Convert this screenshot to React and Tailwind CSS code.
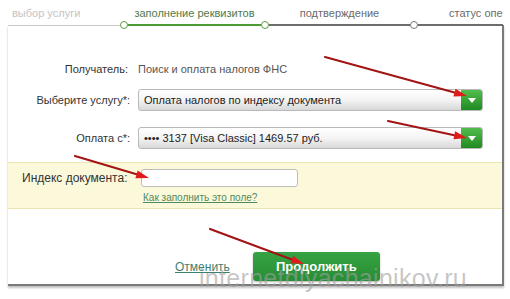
import { useState } from 'react';

// ─── Red arrow overlay (annotation drawn on top of the screenshot) ──────────
function Arrow({ x1, y1, x2, y2 }) {
  const a = Math.atan2(y2 - y1, x2 - x1);
  const len = 13;
  const w = 4;
  const bx = x2 - Math.cos(a) * len;
  const by = y2 - Math.sin(a) * len;
  const px = -Math.sin(a) * w;
  const py = Math.cos(a) * w;
  return (
    <g>
      <line x1={x1} y1={y1} x2={bx} y2={by} stroke="#a31515" strokeWidth="2.2" strokeLinecap="round" />
      <polygon points={`${x2},${y2} ${bx + px},${by + py} ${bx - px},${by - py}`} fill="#e01b1b" />
    </g>
  );
}

function SelectBox({ text }) {
  return (
    <div className="w-[345px] h-[22px] flex items-stretch rounded-[3px] border border-[#b9b9b9] bg-gradient-to-b from-white via-[#f4f4f4] to-[#d8d8d8] overflow-hidden">
      <div className="flex-1 flex items-center pl-[5px] text-[11px] text-[#222]">{text}</div>
      <div className="w-[21px] flex items-center justify-center bg-gradient-to-b from-[#52bd4c] to-[#1e8a22]">
        <svg width="8" height="5" viewBox="0 0 8 5">
          <path d="M0 0 L8 0 L4 5 Z" fill="#ffffff" />
        </svg>
      </div>
    </div>
  );
}

function Circle({ color }) {
  return <div className={`w-[8px] h-[8px] rounded-full bg-white border-[1.5px] ${color}`} />;
}

export default function App() {
  const [index, setIndex] = useState('');

  return (
    <div className="w-[510px] h-[299px] bg-white relative overflow-hidden" style={{ fontFamily: '"Liberation Sans", Arial, sans-serif' }}>
      {/* Steps */}
      <div className="flex h-[21px] items-end text-[11px] leading-none pb-[2px]">
        <div className="w-[124px] pl-[12px] text-[#c4c4c4]">выбор услуги</div>
        <div className="w-[141px] text-center text-[#4d7a4d]">заполнение реквизитов</div>
        <div className="w-[149px] text-center text-[#6a6a6a]">подтверждение</div>
        <div className="w-[92px] pl-[35px] text-[#6a6a6a] whitespace-nowrap">статус опе</div>
      </div>
      <div className="flex items-center h-[8px] pl-[8px]">
        <div className="w-[112px] h-px bg-[#c8c8c8]" />
        <Circle color="border-[#5c9a45]" />
        <div className="w-[133px] h-[2px] bg-[#4b9a33]" />
        <Circle color="border-[#5c9a45]" />
        <div className="w-[141px] h-[2px] bg-[#6d6d6d]" />
        <Circle color="border-[#777]" />
        <div className="w-[85px] h-[2px] bg-[#6d6d6d]" />
      </div>

      {/* Form card */}
      <div className="ml-[8px] w-[496px] h-[261px] -mt-[4px] border-r-2 border-b-2 border-[#7a7a7a] shadow-[0_2px_2px_rgba(0,0,0,0.25)] flex flex-col">
        <div className="flex items-center h-[16px] mt-[36px] text-[11px]">
          <div className="w-[120px] text-right text-[#333]">Получатель:</div>
          <div className="ml-[10px] text-[#555]">Поиск и оплата налогов ФНС</div>
        </div>
        <div className="flex items-center mt-[12px] text-[11px]">
          <div className="w-[122px] text-right text-[#333]">Выберите услугу*:</div>
          <div className="ml-[8px]"><SelectBox text="Оплата налогов по индексу документа" /></div>
        </div>
        <div className="flex items-center mt-[16px] text-[11px]">
          <div className="w-[122px] text-right text-[#333]">Оплата с*:</div>
          <div className="ml-[8px]"><SelectBox text="•••• 3137 [Visa Classic] 1469.57 руб." /></div>
        </div>

        {/* Highlighted field */}
        <div className="mt-[13px] h-[47px] bg-[#fcf8da] border-y border-[#ece3ad] flex flex-col">
          <div className="flex items-center mt-[6px]">
            <div className="w-[119px] pl-[14px] text-[12px] text-[#333] whitespace-nowrap">Индекс документа:</div>
            <input
              value={index}
              onChange={(e) => setIndex(e.target.value)}
              className="ml-[14px] w-[157px] h-[18px] bg-white border border-[#bdbdbd] rounded-[3px] outline-none px-1 text-[11px]"
            />
          </div>
          <div className="ml-[135px] mt-[6px] text-[10px] text-[#4f8a62] underline leading-none">Как заполнить это поле?</div>
        </div>

        {/* Actions */}
        <div className="flex items-center mt-[43px] pl-[167px]">
          <span className="text-[12px] text-[#3f7f70] underline">Отменить</span>
          <button className="ml-[23px] w-[127px] h-[29px] rounded-[3px] bg-gradient-to-b from-[#36a443] to-[#268d33] text-white text-[13px] font-bold shadow-[0_1px_2px_rgba(0,0,0,0.3)]">
            Продолжить
          </button>
        </div>
      </div>

      {/* Watermark */}
      <div className="absolute left-[199px] top-[266px] text-[25px] leading-none text-[#a0a0a0]/60 tracking-[0.3px] pointer-events-none whitespace-nowrap">
        internetdlyachainikov.ru
      </div>

      {/* Annotation arrows */}
      <svg className="absolute inset-0 pointer-events-none" width="510" height="299">
        <Arrow x1={325} y1={57} x2={467} y2={96} />
        <Arrow x1={388} y1={121} x2={467} y2={138} />
        <Arrow x1={75} y1={156} x2={149} y2={178} />
        <Arrow x1={210} y1={229} x2={304} y2={264} />
      </svg>
    </div>
  );
}
